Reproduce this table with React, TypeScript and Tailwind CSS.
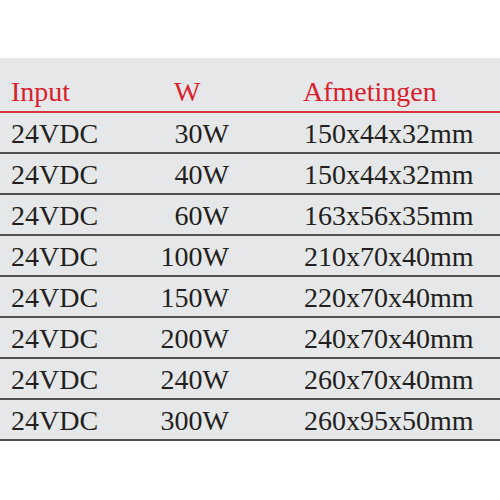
const rows = [
  { input: "24VDC", watt: "30W", size: "150x44x32mm" },
  { input: "24VDC", watt: "40W", size: "150x44x32mm" },
  { input: "24VDC", watt: "60W", size: "163x56x35mm" },
  { input: "24VDC", watt: "100W", size: "210x70x40mm" },
  { input: "24VDC", watt: "150W", size: "220x70x40mm" },
  { input: "24VDC", watt: "200W", size: "240x70x40mm" },
  { input: "24VDC", watt: "240W", size: "260x70x40mm" },
  { input: "24VDC", watt: "300W", size: "260x95x50mm" },
];

export default function App() {
  return (
    <div className="w-[500px] h-[500px] bg-white font-['Liberation_Serif',serif] text-[28px] leading-[28px]">
      <div className="h-[58px]" />
      <div className="bg-[#e6e7e8]">
        {/* header */}
        <div className="grid grid-cols-[160px_69px_1fr] h-[55px] pt-[20px] border-b-2 border-[#d9323b] text-[#d7222d]">
          <div className="pl-[11px]">Input</div>
          <div className="pl-[14px]">W</div>
          <div className="pl-[74px]">Afmetingen</div>
        </div>

        {rows.map((row, i) => (
          <div
            key={i}
            className="grid grid-cols-[160px_69px_1fr] h-[41px] pt-[7px] border-b-2 border-[#505153] text-[#231f20]"
          >
            <div className="pl-[11px]">{row.input}</div>
            <div className="text-right">{row.watt}</div>
            <div className="pl-[75px]">{row.size}</div>
          </div>
        ))}
      </div>
    </div>
  );
}
